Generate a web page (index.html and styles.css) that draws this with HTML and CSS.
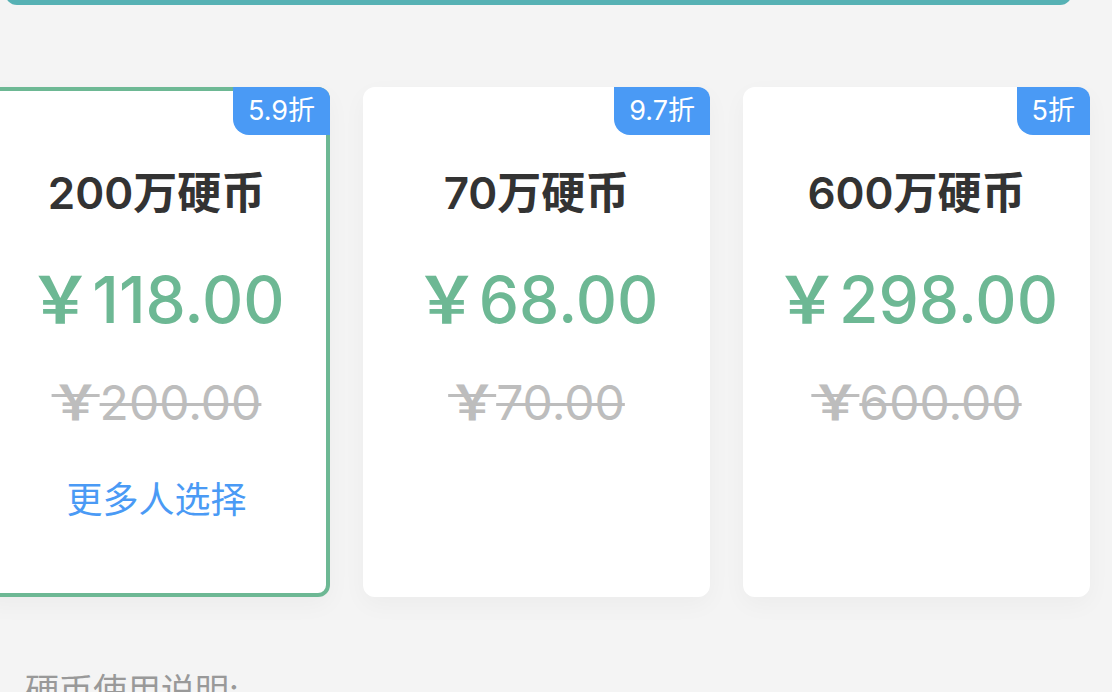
FILE: index.html
```html
<!DOCTYPE html>
<html lang="zh-CN">
<head>
<meta charset="utf-8">
<title>硬币充值</title>
<link rel="stylesheet" href="styles.css">
</head>
<body>
<div class="page">
  <div class="top-bar"></div>
  <div class="cards">
    <div class="card selected">
      <div class="badge">5.9折</div>
      <div class="title">200万硬币</div>
      <div class="price"><span class="yen">￥</span>118.00</div>
      <div class="orig"><span class="yen">￥</span>200.00</div>
      <div class="more">更多人选择</div>
    </div>
    <div class="card">
      <div class="badge">9.7折</div>
      <div class="title">70万硬币</div>
      <div class="price"><span class="yen">￥</span>68.00</div>
      <div class="orig"><span class="yen">￥</span>70.00</div>
    </div>
    <div class="card">
      <div class="badge">5折</div>
      <div class="title">600万硬币</div>
      <div class="price"><span class="yen">￥</span>298.00</div>
      <div class="orig"><span class="yen">￥</span>600.00</div>
    </div>
  </div>
  <div class="notes">硬币使用说明:</div>
</div>
</body>
</html>
```

FILE: styles.css
```css
html, body {
  margin: 0;
  padding: 0;
  background: #f4f4f4;
  overflow: hidden;
}
.page {
  width: 1112px;
  height: 692px;
  overflow: hidden;
  font-family: Inter, "Noto Sans CJK SC", sans-serif;
}
.top-bar {
  height: 20px;
  margin: -15px 40px 0 5px;
  background: #56b1b4;
  border-radius: 0 0 12px 12px;
}
.cards {
  display: flex;
  gap: 33px;
  margin: 82px 0 0 -17px;
}
.card {
  position: relative;
  flex: 0 0 347px;
  height: 510px;
  box-sizing: border-box;
  background: #fff;
  border: 4px solid #fff;
  border-radius: 12px;
  box-shadow: 0 8px 24px rgba(0, 0, 0, 0.035);
  display: flex;
  flex-direction: column;
  align-items: center;
  padding-top: 50px;
}
.card.selected {
  border-color: #6db894;
}
.badge {
  position: absolute;
  top: -4px;
  right: -4px;
  height: 48px;
  line-height: 48px;
  padding: 0 15px;
  background: #4a9af5;
  color: #fff;
  font-size: 27px;
  border-radius: 0 12px 0 16px;
}
.title {
  font-size: 44px;
  font-weight: 600;
  color: #333;
  line-height: 104px;
}
.price {
  font-size: 64px;
  font-weight: 500;
  color: #6db894;
  line-height: 100px;
}
.orig {
  font-size: 48px;
  color: #bdbdbd;
  line-height: 98px;
  text-decoration: line-through;
  text-decoration-thickness: 3px;
}
.more {
  font-size: 36px;
  color: #4a9af5;
  line-height: 78px;
  margin-top: 9px;
}
.yen {
  font-family: "Noto Sans CJK SC", sans-serif;
  font-weight: 700;
}
.notes {
  margin: 70px 0 0 25px;
  font-size: 34px;
  color: #999;
  line-height: 48px;
}
```
